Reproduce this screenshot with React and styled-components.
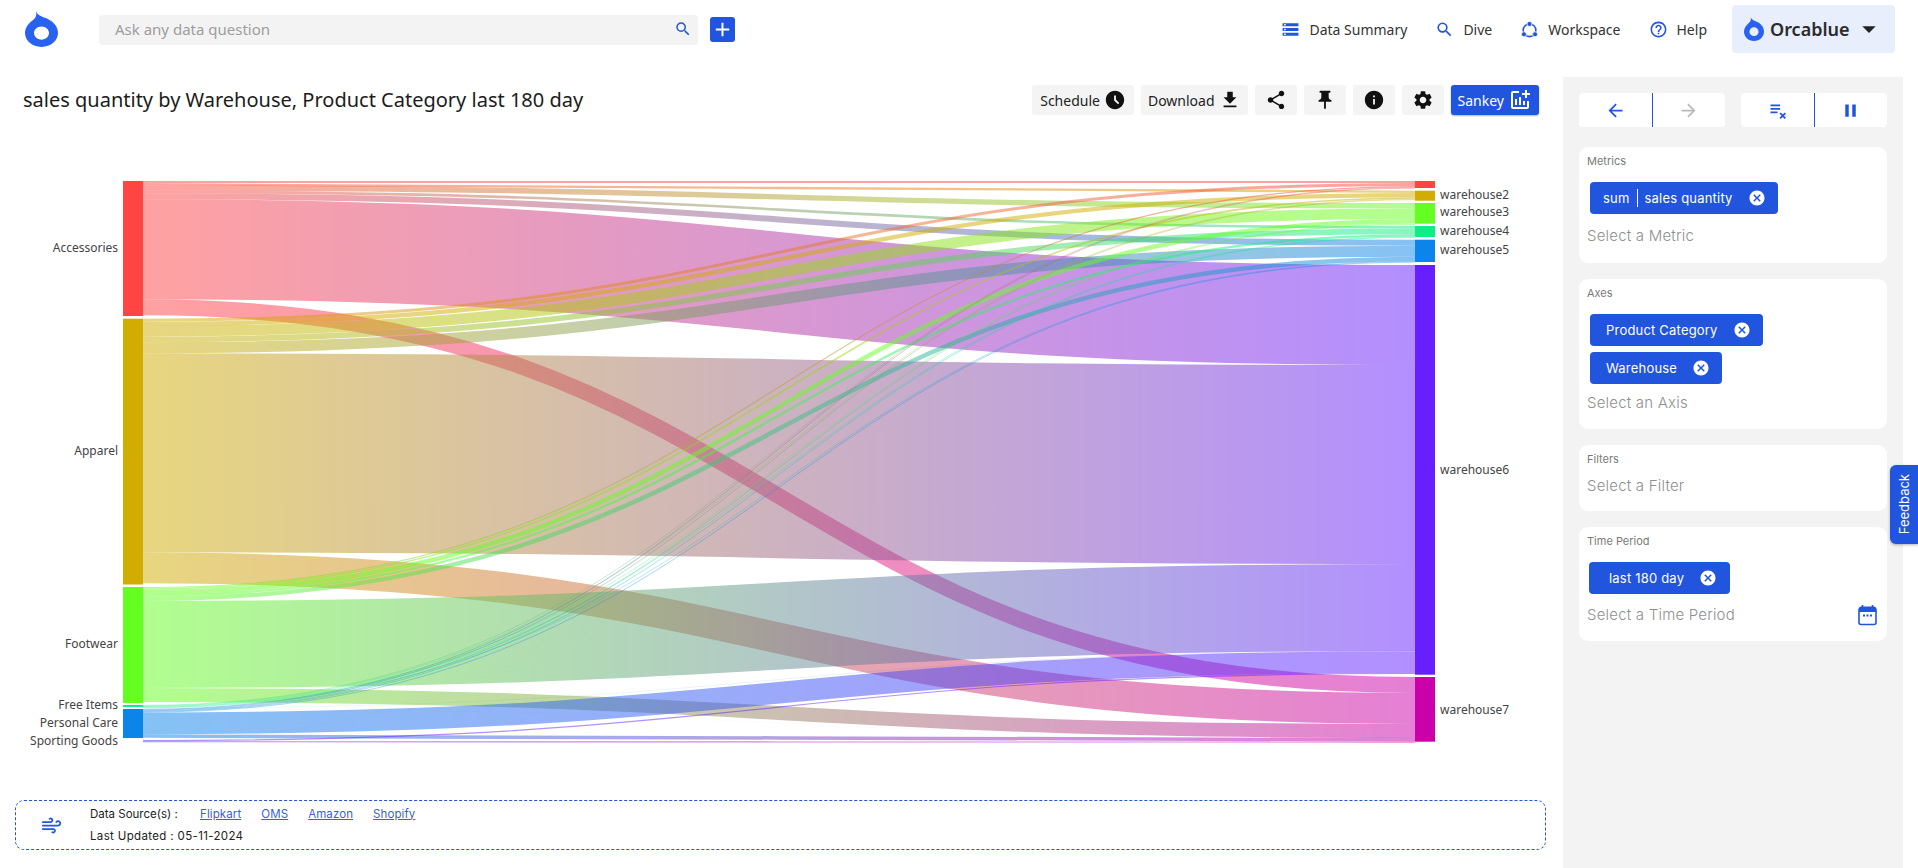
import styled, { createGlobalStyle } from "styled-components";
import {
  MdStorage,
  MdSearch,
  MdHelpOutline,
  MdFileDownload,
  MdShare,
  MdPushPin,
  MdInfo,
  MdSettings,
  MdAddchart,
  MdArrowBack,
  MdArrowForward,
  MdPause,
  MdCancel,
  MdAccessTimeFilled,
  MdArrowDropDown,
  MdAdd,
} from "react-icons/md";
import { LuWind } from "react-icons/lu";

const BLUE = "#2255dd";
const SANS = `"Noto Sans", "Open Sans", sans-serif`;
const WIDE = `Inter, "Noto Sans", sans-serif`;

const GlobalStyle = createGlobalStyle`
  html, body {
    margin: 0;
    padding: 0;
    background: #fff;
    overflow: hidden;
  }
  * { box-sizing: border-box; }
`;

// sankey data, y values are page pixels
const PALETTE = ["#ff4444", "#d0ad00", "#64ff20", "#0cef86", "#0c85ea", "#6620ff", "#cc00aa"];
const X0 = 143;
const X1 = 1415;

const sources = [
  { name: "Accessories", top: 181, bottom: 316, labelY: 247, color: 0 },
  { name: "Apparel", top: 318.7, bottom: 584.5, labelY: 450, color: 1 },
  { name: "Footwear", top: 587, bottom: 703, labelY: 643, color: 2 },
  { name: "Free Items", top: 705, bottom: 707, labelY: 704, color: 3 },
  { name: "Personal Care", top: 709, bottom: 738, labelY: 722, color: 4 },
  { name: "Sporting Goods", top: 740, bottom: 740, labelY: 740, color: 5 },
];

const targets = [
  { name: "", top: 181, bottom: 188, color: 0 },
  { name: "warehouse2", top: 190.7, bottom: 200.7, labelY: 194, color: 1 },
  { name: "warehouse3", top: 203, bottom: 223.7, labelY: 211, color: 2 },
  { name: "warehouse4", top: 226, bottom: 237, labelY: 230, color: 3 },
  { name: "warehouse5", top: 239.7, bottom: 262, labelY: 249, color: 4 },
  { name: "warehouse6", top: 265, bottom: 674.7, labelY: 469, color: 5 },
  { name: "warehouse7", top: 677, bottom: 741.7, labelY: 709, color: 6 },
];

// rows are sources, columns are targets
const flows = [
  [2, 2.3, 5.4, 2.6, 6, 100, 16],
  [3, 4.3, 10.7, 5.6, 11, 199, 31],
  [1.2, 1.5, 4.5, 2.3, 4.5, 87, 14],
  [0.6, 0.6, 0.6, 0.6, 0.6, 0.2, 0.05],
  [0.7, 0.7, 0.7, 0.7, 0.7, 21.8, 3.5],
  [0.02, 0.02, 0.02, 0.02, 0.02, 1.1, 1.1],
];

function buildLinks() {
  const links = [];
  const leftY = sources.map((s) => s.top);
  const rightY = targets.map((t) => t.top);
  flows.forEach((row, s) => {
    row.forEach((w, t) => {
      const y0 = leftY[s] + w / 2;
      const y1 = rightY[t] + w / 2;
      leftY[s] += w;
      rightY[t] += w;
      links.push({ s, t, w, y0, y1 });
    });
  });
  return links;
}

const links = buildLinks();
const midX = (X0 + X1) / 2;

const Page = styled.div`
  width: 1918px;
  height: 868px;
  position: relative;
  overflow: hidden;
  font-family: ${SANS};
  color: #222;
`;

const Header = styled.header`
  height: 77px;
  display: flex;
  align-items: flex-start;
  padding: 5px 23px 0 25px;
`;

const Logo = styled.svg`
  width: 33px;
  height: 36px;
  margin-top: 6px;
  color: #2962f0;
`;

const SearchBar = styled.div`
  width: 599px;
  height: 30px;
  margin: 10px 0 0 41px;
  padding: 0 6px 2px 16px;
  background: #f3f3f3;
  border-radius: 4px;
  display: flex;
  align-items: center;
  justify-content: space-between;
  font-size: 15px;
  color: #9d9d9d;
  svg {
    color: ${BLUE};
    font-size: 18px;
  }
`;

const PlusButton = styled.div`
  width: 25px;
  height: 25px;
  margin: 12px 0 0 12px;
  background: ${BLUE};
  border-radius: 3px;
  color: #fff;
  font-size: 23px;
  display: flex;
  align-items: center;
  justify-content: center;
`;

const Nav = styled.nav`
  margin-left: auto;
  display: flex;
  align-items: center;
  height: 48px;
`;

const NavItem = styled.div`
  display: flex;
  align-items: center;
  gap: 9px;
  margin-right: 28px;
  font-size: 14px;
  color: #333;
  svg {
    color: ${BLUE};
    font-size: 19px;
  }
`;

const Account = styled.div`
  width: 163px;
  height: 48px;
  margin-left: -3px;
  background: #e8eefb;
  border-radius: 4px;
  display: flex;
  align-items: center;
  padding-left: 12px;
  font-size: 18px;
  font-weight: 600;
  color: #2b2b2b;
  gap: 6px;
  svg:last-child {
    font-size: 32px;
    margin-left: -3px;
    color: #222;
  }
`;

const SmallLogo = styled.svg`
  width: 20px;
  height: 24px;
  color: #2962f0;
`;

const Body = styled.div`
  display: flex;
  height: 791px;
`;

const Main = styled.main`
  width: 1563px;
`;

const TitleRow = styled.div`
  height: 53px;
  padding: 8px 24px 0 23px;
  display: flex;
  align-items: flex-start;
  justify-content: space-between;
`;

const Title = styled.h1`
  margin: 0;
  font-size: 20px;
  font-weight: 400;
  line-height: 30px;
  color: #1c1c1c;
`;

const Toolbar = styled.div`
  display: flex;
  gap: 7px;
`;

const ToolButton = styled.button`
  height: 30px;
  min-width: 42px;
  padding: 0 ${(p) => p.$pad || 8}px;
  border: 0;
  border-radius: 3px;
  display: flex;
  align-items: center;
  justify-content: center;
  gap: 4px;
  font-family: ${SANS};
  font-size: 14px;
  background: ${(p) => (p.$primary ? BLUE : "#f4f4f4")};
  color: ${(p) => (p.$primary ? "#fff" : "#222")};
  box-shadow: ${(p) => (p.$primary ? "0 1px 2px rgba(0,0,0,.3)" : "none")};
  svg {
    font-size: ${(p) => p.$icon || 22}px;
    color: ${(p) => (p.$primary ? "#fff" : "#111")};
  }
`;

const Chart = styled.svg`
  display: block;
  width: 1563px;
  height: 670px;
`;

const ChartLabel = styled.text`
  font-family: ${SANS};
  font-size: 12px;
  fill: #444;
  dominant-baseline: central;
`;

const SourceBox = styled.div`
  height: 50px;
  margin: 0 17px 0 15px;
  border: 1px dashed ${BLUE};
  border-radius: 9px;
  display: flex;
  align-items: center;
  font-family: ${WIDE};
  font-size: 11.5px;
  color: #222;
`;

const SourceIcon = styled.div`
  width: 74px;
  padding-left: 25px;
  color: ${BLUE};
  font-size: 21px;
  display: flex;
`;

const SourceText = styled.div`
  display: flex;
  flex-direction: column;
  gap: 9px;
`;

const SourceRow = styled.div`
  display: flex;
  line-height: 13px;
  letter-spacing: ${(p) => p.$spacing || 0}px;
`;

const SourceLabel = styled.span`
  width: 110px;
  letter-spacing: 0;
`;

const SourceLink = styled.a`
  color: #3a5fd8;
  text-decoration: underline;
  margin-right: 20px;
`;

const Side = styled.aside`
  width: 340px;
  background: #f3f3f3;
  padding: 16px;
  font-family: ${WIDE};
`;

const Controls = styled.div`
  display: flex;
  justify-content: space-between;
  margin-bottom: 20px;
`;

const ControlGroup = styled.div`
  width: 146px;
  height: 34px;
  background: #fff;
  border-radius: 4px;
  display: flex;
`;

const ControlButton = styled.div`
  flex: 1;
  display: flex;
  align-items: center;
  justify-content: center;
  font-size: 21px;
  color: ${(p) => (p.$off ? "#b9b9b9" : BLUE)};
  & + & {
    border-left: 1px solid ${BLUE};
  }
`;

const Card = styled.section`
  height: ${(p) => p.$h}px;
  margin-bottom: 16px;
  padding: 8px 8px 0;
  background: #fff;
  border-radius: 9px;
  position: relative;
`;

const CardLabel = styled.div`
  font-size: 11px;
  line-height: 13px;
  color: #7a7a7a;
`;

const ChipList = styled.div`
  margin: 14px 0 ${(p) => p.$after}px ${(p) => p.$indent ?? 3}px;
  display: flex;
  flex-direction: column;
  align-items: flex-start;
  gap: 6px;
`;

const Chip = styled.div`
  height: 32px;
  padding: 0 ${(p) => p.$right || 12}px 0 ${(p) => p.$left || 16}px;
  background: ${BLUE};
  border-radius: 4px;
  display: flex;
  align-items: center;
  gap: 15px;
  color: #fff;
  font-size: 13px;
  letter-spacing: 0.2px;
  svg {
    font-size: 18px;
  }
`;

const ChipDivider = styled.span`
  width: 1px;
  height: 18px;
  background: #fff;
  margin: 0 -8px;
`;

const Placeholder = styled.div`
  font-size: 15px;
  font-weight: 300;
  line-height: 22px;
  letter-spacing: 0.2px;
  color: #8f8f8f;
  margin-top: ${(p) => p.$top || 0}px;
`;

const TimeRow = styled.div`
  display: flex;
  align-items: center;
  justify-content: space-between;
  padding-right: 2px;
`;

const Feedback = styled.div`
  position: absolute;
  right: 0;
  top: 465px;
  width: 28px;
  height: 79px;
  background: ${BLUE};
  border-radius: 6px 0 0 6px;
  box-shadow: 0 1px 3px rgba(0, 0, 0, 0.3);
  color: #fff;
  font-family: ${WIDE};
  font-size: 13px;
  display: flex;
  align-items: center;
  justify-content: center;
  writing-mode: vertical-rl;
  span {
    transform: rotate(180deg);
  }
`;

const dropPath =
  "M11 0c1 4 4 6 8 8 8 3 14 10 14 19 0 9-7 17-16.500 17S0 36 0 27C0 20 4 15 8 11c3-3 4-6 3-11zM16.500 19c-4 0-7.500 3.500-7.500 8s3.500 8 7.500 8 7.500-3.500 7.500-8-3.500-8-7.500-8z";

const Drop = ({ as: Comp }) => (
  <Comp viewBox="0 0 33 44" preserveAspectRatio="none">
    <path d={dropPath} fill="currentColor" fillRule="evenodd" />
  </Comp>
);

const WorkspaceIcon = () => (
  <svg width="1em" height="1em" viewBox="0 0 24 24" fill="none" stroke="currentColor">
    <circle cx="12" cy="13" r="8" strokeWidth="2" />
    <circle cx="12" cy="5" r="3.2" fill="currentColor" stroke="#fff" strokeWidth="1" />
    <circle cx="5" cy="18" r="3.2" fill="currentColor" stroke="#fff" strokeWidth="1" />
    <circle cx="19" cy="18" r="3.2" fill="currentColor" stroke="#fff" strokeWidth="1" />
  </svg>
);

const ClearIcon = () => (
  <svg width="1em" height="1em" viewBox="0 0 24 24" fill="none" stroke="currentColor" strokeWidth="2">
    <path d="M4 6h11M4 10h11M4 14h8" />
    <path d="M15 15l6 6M21 15l-6 6" />
  </svg>
);

const CalendarIcon = () => (
  <svg width="19" height="21" viewBox="0 0 19 21" fill="none">
    <rect x="1" y="3" width="17" height="16.500" rx="2" stroke={BLUE} strokeWidth="1.600" />
    <path d="M1 3.500a2 2 0 0 1 2-2h13a2 2 0 0 1 2 2V7H1z" fill={BLUE} />
    <path d="M4.500 0v3M14.500 0v3" stroke={BLUE} strokeWidth="1.600" />
    <path d="M5 10.500h2M8.500 10.500h2M12 10.500h2" stroke={BLUE} strokeWidth="1.800" />
  </svg>
);

const Sankey = () => (
  <Chart viewBox="0 130 1563 670">
    <defs>
      {links.map((l) => (
        <linearGradient
          key={`g${l.s}-${l.t}`}
          id={`g${l.s}-${l.t}`}
          gradientUnits="userSpaceOnUse"
          x1={X0}
          x2={X1}
          y1="0"
          y2="0"
        >
          <stop offset="0" stopColor={PALETTE[sources[l.s].color]} />
          <stop offset="1" stopColor={PALETTE[targets[l.t].color]} />
        </linearGradient>
      ))}
    </defs>
    {links.map((l) => (
      <path
        key={`l${l.s}-${l.t}`}
        d={`M${X0},${l.y0}C${midX},${l.y0} ${midX},${l.y1} ${X1},${l.y1}`}
        fill="none"
        stroke={`url(#g${l.s}-${l.t})`}
        strokeWidth={l.w}
        strokeOpacity="0.5"
      />
    ))}
    {sources.map((n) => (
      <rect key={n.name} x={123} y={n.top} width={20} height={n.bottom - n.top} fill={PALETTE[n.color]} />
    ))}
    {targets.map((n) => (
      <rect key={n.top} x={X1} y={n.top} width={20} height={n.bottom - n.top} fill={PALETTE[n.color]} />
    ))}
    {sources.map((n) => (
      <ChartLabel key={n.name} x={118} y={n.labelY} textAnchor="end">
        {n.name}
      </ChartLabel>
    ))}
    {targets
      .filter((n) => n.name)
      .map((n) => (
        <ChartLabel key={n.name} x={1440} y={n.labelY}>
          {n.name}
        </ChartLabel>
      ))}
  </Chart>
);

export default function App() {
  return (
    <Page>
      <GlobalStyle />
      <Header>
        <Drop as={Logo} />
        <SearchBar>
          Ask any data question
          <MdSearch />
        </SearchBar>
        <PlusButton>
          <MdAdd />
        </PlusButton>
        <Nav>
          <NavItem>
            <MdStorage />
            Data Summary
          </NavItem>
          <NavItem>
            <MdSearch />
            Dive
          </NavItem>
          <NavItem>
            <WorkspaceIcon />
            Workspace
          </NavItem>
          <NavItem>
            <MdHelpOutline />
            Help
          </NavItem>
          <Account>
            <Drop as={SmallLogo} />
            Orcablue
            <MdArrowDropDown />
          </Account>
        </Nav>
      </Header>
      <Body>
        <Main>
          <TitleRow>
            <Title>sales quantity by Warehouse, Product Category last 180 day</Title>
            <Toolbar>
              <ToolButton>
                Schedule
                <MdAccessTimeFilled />
              </ToolButton>
              <ToolButton $pad={7}>
                Download
                <MdFileDownload />
              </ToolButton>
              <ToolButton>
                <MdShare />
              </ToolButton>
              <ToolButton>
                <MdPushPin />
              </ToolButton>
              <ToolButton>
                <MdInfo />
              </ToolButton>
              <ToolButton>
                <MdSettings />
              </ToolButton>
              <ToolButton $primary $icon={24} $pad={7}>
                Sankey
                <MdAddchart />
              </ToolButton>
            </Toolbar>
          </TitleRow>
          <Sankey />
          <SourceBox>
            <SourceIcon>
              <LuWind />
            </SourceIcon>
            <SourceText>
              <SourceRow $spacing={0.1}>
                <SourceLabel>Data Source(s) :</SourceLabel>
                <SourceLink>Flipkart</SourceLink>
                <SourceLink>OMS</SourceLink>
                <SourceLink>Amazon</SourceLink>
                <SourceLink>Shopify</SourceLink>
              </SourceRow>
              <SourceRow $spacing={0.35}>Last Updated : 05-11-2024</SourceRow>
            </SourceText>
          </SourceBox>
        </Main>
        <Side>
          <Controls>
            <ControlGroup>
              <ControlButton>
                <MdArrowBack />
              </ControlButton>
              <ControlButton $off>
                <MdArrowForward />
              </ControlButton>
            </ControlGroup>
            <ControlGroup>
              <ControlButton>
                <ClearIcon />
              </ControlButton>
              <ControlButton>
                <MdPause />
              </ControlButton>
            </ControlGroup>
          </Controls>
          <Card $h={116}>
            <CardLabel>Metrics</CardLabel>
            <ChipList $after={11}>
              <Chip $left={13}>
                sum
                <ChipDivider />
                sales quantity
                <MdCancel />
              </Chip>
            </ChipList>
            <Placeholder>Select a Metric</Placeholder>
          </Card>
          <Card $h={150}>
            <CardLabel>Axes</CardLabel>
            <ChipList $after={8}>
              <Chip>
                Product Category
                <MdCancel />
              </Chip>
              <Chip>
                Warehouse
                <MdCancel />
              </Chip>
            </ChipList>
            <Placeholder>Select an Axis</Placeholder>
          </Card>
          <Card $h={66}>
            <CardLabel>Filters</CardLabel>
            <Placeholder $top={9}>Select a Filter</Placeholder>
          </Card>
          <Card $h={114}>
            <CardLabel>Time Period</CardLabel>
            <ChipList $after={10} $indent={2}>
              <Chip $left={20} $right={13}>
                last 180 day
                <MdCancel />
              </Chip>
            </ChipList>
            <TimeRow>
              <Placeholder>Select a Time Period</Placeholder>
              <CalendarIcon />
            </TimeRow>
          </Card>
        </Side>
      </Body>
      <Feedback>
        <span>Feedback</span>
      </Feedback>
    </Page>
  );
}
